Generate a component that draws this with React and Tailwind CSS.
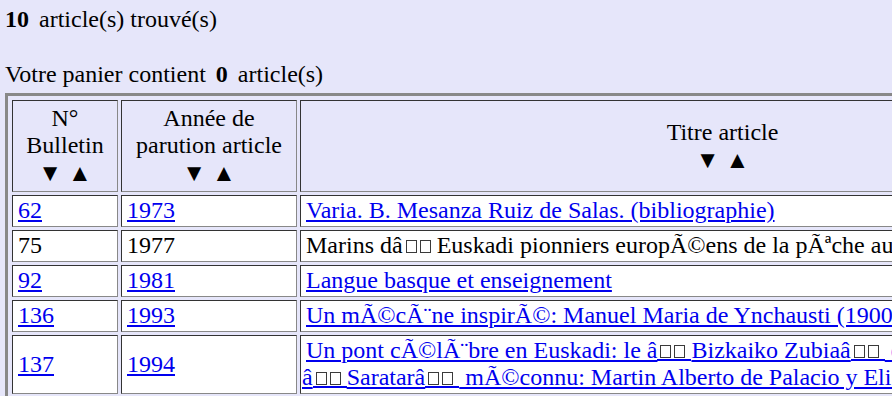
import React from "react";

const B = "\u0001";

const rows = [
  { n: "62", y: "1973", t: ["Varia. B. Mesanza Ruiz de Salas. (bibliographie)"], link: true },
  { n: "75", y: "1977", t: [`Marins d\u00e2${B}Euskadi pionniers europ\u00c3\u00a9ens de la p\u00c3\u00aache aux baleines`], link: false },
  { n: "92", y: "1981", t: ["Langue basque et enseignement"], link: true },
  { n: "136", y: "1993", t: ["Un m\u00c3\u00a9c\u00c3\u00a8ne inspir\u00c3\u00a9: Manuel Maria de Ynchausti (1900-1961)"], link: true },
  {
    n: "137",
    y: "1994",
    t: [
      `Un pont c\u00c3\u00a9l\u00c3\u00a8bre en Euskadi: le \u00e2${B}Bizkaiko Zubia\u00e2${B} et son auteur, le`,
      `\u00e2${B}Saratar\u00e2${B} m\u00c3\u00a9connu: Martin Alberto de Palacio y Elissague`,
    ],
    link: true,
  },
];

/* B marks a pair of undisplayable characters, drawn as two empty boxes */
function Boxed({ text, link }) {
  const parts = text.split(B);
  const out = [];
  parts.forEach((p, i) => {
    if (i > 0) {
      out.push(
        <span key={"b" + i} className="relative inline-block w-[34px] h-[13px] indent-0 align-baseline">
          <span className="absolute left-[3px] top-0 w-[11px] h-[13px] border border-[#3a3a3a]" />
          <span className="absolute left-[17px] top-0 w-[11px] h-[13px] border border-[#3a3a3a]" />
          {link && <span className="absolute left-0 right-0 top-[14px] h-[2px] bg-[#0000ee]" />}
        </span>
      );
    }
    if (p) out.push(<React.Fragment key={"t" + i}>{p}</React.Fragment>);
  });
  return <>{out}</>;
}

const cellBorder =
  "border border-t-[#333333] border-l-[#333333] border-r-[#888888] border-b-[#888888]";

function Cell({ children }) {
  return (
    <td
      className={`${cellBorder} bg-white align-middle whitespace-nowrap pt-[1px] pb-[2px] pl-[1px] pr-[1px] leading-[27px] indent-[4px]`}
    >
      {children}
    </td>
  );
}

function Lnk({ children }) {
  return <a href="#" className="text-[#0000ee] underline">{children}</a>;
}

function Arrows() {
  return <div className="leading-[28px]">▼ ▲</div>;
}

const thCls = `${cellBorder} font-normal text-center align-middle pt-[4px] pb-[4px] px-[1px] leading-[27px]`;

export default function App() {
  return (
    <div className="w-[892px] h-[396px] overflow-hidden bg-[#e6e6fa] text-black font-['Liberation_Serif',serif] text-[24px] pl-[5px] pt-[6px]">
      <div className="leading-[27px] whitespace-nowrap">
        <b className="mr-[4px]">10</b> article(s) trouvé(s)
      </div>
      <div className="h-[28px]" />
      <div className="leading-[27px] whitespace-nowrap">
        Votre panier contient <b className="ml-[4px] mr-[4px]">0</b> article(s)
      </div>
      <table className="mt-[5px] table-fixed w-[1147px] border-separate border-spacing-[3px] border-[3px] border-[#888888] p-[1px]">
        <thead>
          <tr>
            <th className={`${thCls} w-[106px]`}>
              <div>N°</div>
              <div>Bulletin</div>
              <Arrows />
            </th>
            <th className={`${thCls} w-[176px]`}>
              <div>Année de</div>
              <div>parution article</div>
              <Arrows />
            </th>
            <th className={`${thCls} w-[845px]`}>
              <div>Titre article</div>
              <Arrows />
            </th>
          </tr>
        </thead>
        <tbody>
          {rows.map((r) => (
            <tr key={r.n}>
              <Cell>{r.link ? <Lnk>{r.n}</Lnk> : r.n}</Cell>
              <Cell>{r.link ? <Lnk>{r.y}</Lnk> : r.y}</Cell>
              <Cell>
                {r.link ? (
                  <Lnk>
                    {r.t.map((line, i) => (
                      <React.Fragment key={i}>
                        {i > 0 && <br />}
                        <Boxed text={line} link />
                      </React.Fragment>
                    ))}
                  </Lnk>
                ) : (
                  <Boxed text={r.t[0]} link={false} />
                )}
              </Cell>
            </tr>
          ))}
        </tbody>
      </table>
    </div>
  );
}
